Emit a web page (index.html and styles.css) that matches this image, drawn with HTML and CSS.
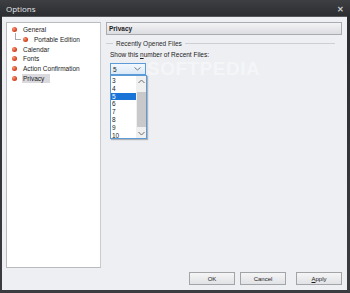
FILE: index.html
```html
<!DOCTYPE html>
<html lang="en">
  <head>
    <meta charset="UTF-8" />
    <title>Options</title>
    <link rel="stylesheet" href="styles.css">
  </head>
  <body>
    <div class="window">
      <div class="titlebar">
        <span class="title">Options</span>
        <span class="close">&#x2715;</span>
      </div>

      <div class="client">
        <div class="main">
          <!-- tree of pages on the left -->
          <ul class="tree">
            <li class="node"><span class="dot"></span>General</li>
            <li class="node child"><span class="branch"></span><span class="dot"></span>Portable Edition</li>
            <li class="node"><span class="dot"></span>Calendar</li>
            <li class="node"><span class="dot"></span>Fonts</li>
            <li class="node"><span class="dot"></span>Action Confirmation</li>
            <li class="node"><span class="dot"></span><span class="selected">Privacy</span></li>
          </ul>

          <div class="page">
            <div class="page-header">Privacy</div>

            <div class="group-title">
              <span class="rule short"></span>
              <span>Recently Opened Files</span>
              <span class="rule"></span>
            </div>

            <div class="label">Show this <u>n</u>umber of Recent Files:</div>

            <div class="combo">
              <div class="combo-box">
                <span>5</span>
                <svg class="chev" width="7" height="4" viewBox="0 0 7 4">
                  <path d="M0.5 0.5 L3.5 3 L6.5 0.5" fill="none" stroke="#7a7d82" stroke-width="1" />
                </svg>
              </div>
              <div class="combo-list">
                <ul class="options">
                  <li>3</li>
                  <li>4</li>
                  <li class="active">5</li>
                  <li>6</li>
                  <li>7</li>
                  <li>8</li>
                  <li>9</li>
                  <li>10</li>
                </ul>
                <div class="scrollbar">
                  <svg width="7" height="6" viewBox="0 0 7 6">
                    <path d="M0.5 4 L3.5 1 L6.5 4" fill="none" stroke="#6a6d72" stroke-width="1" />
                  </svg>
                  <div class="thumb"></div>
                  <svg width="7" height="6" viewBox="0 0 7 6">
                    <path d="M0.5 2 L3.5 5 L6.5 2" fill="none" stroke="#6a6d72" stroke-width="1" />
                  </svg>
                </div>
              </div>
            </div>
          </div>
        </div>

        <div class="buttons">
          <button class="btn">OK</button>
          <button class="btn">Cancel</button>
          <button class="btn apply"><u>A</u>pply</button>
        </div>
      </div>

      <div class="watermark">SOFTPEDIA</div>
    </div>
  </body>
</html>
```

FILE: styles.css
```css
* {
  box-sizing: border-box;
  margin: 0;
  padding: 0;
}

body {
  width: 350px;
  height: 293px;
  overflow: hidden;
  font-family: "Liberation Sans", Arial, sans-serif;
  font-size: 6.5px;
  color: #1b1b1b;
  background: #26282b;
}

.window {
  position: relative;
  width: 350px;
  height: 293px;
  display: flex;
  flex-direction: column;
  padding: 0 3px 3px 2px;
  background: linear-gradient(to bottom, #3d3f43, #2a2c2f 17px, #3a3c40);
}

.titlebar {
  height: 17px;
  display: flex;
  align-items: center;
  justify-content: space-between;
  padding: 0 3px 0 4px;
  color: #e6e6e8;
  font-family: "Open Sans", "Liberation Sans", sans-serif;
  font-size: 8px;
}

.close {
  font-size: 8px;
  color: #c8c9cc;
  font-weight: bold;
}

.client {
  flex: 1;
  display: flex;
  flex-direction: column;
  background: #eeeff2;
  padding: 5px 5px 5px 4px;
  border-top: 1px solid #55575b;
}

.main {
  display: flex;
  gap: 5px;
  height: 246px;
}

/* tree on the left */
.tree {
  list-style: none;
  width: 95px;
  background: #fff;
  border: 1px solid #b9bbbf;
  border-right-color: #c9cbcf;
  padding: 2px 0 0 2px;
}

.node {
  position: relative;
  height: 9.7px;
  display: flex;
  align-items: center;
  padding-left: 3px;
  white-space: nowrap;
}

.node.child {
  padding-left: 14px;
}

.dot {
  width: 5px;
  height: 5px;
  border-radius: 50%;
  background: radial-gradient(circle at 35% 35%, #f49a7d, #d8431f 60%, #b7331a);
  margin-right: 6px;
  flex-shrink: 0;
}

.branch {
  position: absolute;
  left: 6px;
  top: -2px;
  width: 6px;
  height: 7px;
  border-left: 1px solid #a6a8ac;
  border-bottom: 1px solid #a6a8ac;
}

.selected {
  background: #d9d9de;
  padding: 1px 6px 1px 1px;
  margin-left: -1px;
}

/* page on the right */
.page {
  flex: 1;
  display: flex;
  flex-direction: column;
}

.page-header {
  height: 13px;
  display: flex;
  align-items: center;
  padding-left: 2px;
  font-weight: bold;
  border: 1px solid #a9abaf;
  background: linear-gradient(to bottom, #f3f3f5, #dcdde1);
}

.group-title {
  display: flex;
  align-items: center;
  gap: 3px;
  margin-top: 3px;
  height: 10px;
  padding-right: 7px;
  color: #2a2a2a;
}

.rule {
  flex: 1;
  height: 1px;
  background: #cdcfd3;
}

.rule.short {
  flex: 0 0 7px;
}

.label {
  margin: 2px 0 0 4px;
  height: 10px;
  line-height: 10px;
}

.label u {
  text-decoration-thickness: 0.5px;
}

.combo {
  margin: 3px 0 0 4px;
  width: 37px;
}

.combo-box {
  height: 12px;
  width: 36px;
  display: flex;
  align-items: center;
  justify-content: space-between;
  padding: 0 4px 0 2px;
  border: 1px solid #5b9bd8;
  background: linear-gradient(to bottom, #f3f8fd, #dbe9f7);
}

.combo-list {
  display: flex;
  height: 64px;
  border: 1px solid #5b9bd8;
  background: #fff;
  box-shadow: 1px 1px 1px rgba(0, 0, 0, 0.25);
}

.options {
  list-style: none;
  flex: 1;
  padding-top: 1px;
}

.options li {
  height: 7.8px;
  line-height: 7.8px;
  padding-left: 1px;
}

.options li.active {
  background: #1a73d6;
  color: #fff;
}

.scrollbar {
  width: 10px;
  display: flex;
  flex-direction: column;
  align-items: center;
  justify-content: space-between;
  background: #f0f0f0;
  padding: 3px 0 2px;
}

.thumb {
  width: 9px;
  flex: 1;
  margin: 7px 0 3px;
  background: #c9c9cb;
}

/* bottom buttons */
.buttons {
  display: flex;
  justify-content: flex-end;
  gap: 5px;
  margin-top: 4px;
}

.btn {
  width: 46px;
  height: 13px;
  font-family: inherit;
  font-size: 6px;
  color: #1b1b1b;
  border: 1px solid #a2a4a8;
  background: linear-gradient(to bottom, #f5f5f6, #e1e2e5);
}

.btn.apply {
  margin-left: 5px;
}

.watermark {
  position: absolute;
  left: 147px;
  top: 58px;
  font-family: "Liberation Sans", sans-serif;
  font-size: 19px;
  font-weight: bold;
  letter-spacing: 0.5px;
  color: rgba(255, 255, 255, 0.4);
  pointer-events: none;
}
```
